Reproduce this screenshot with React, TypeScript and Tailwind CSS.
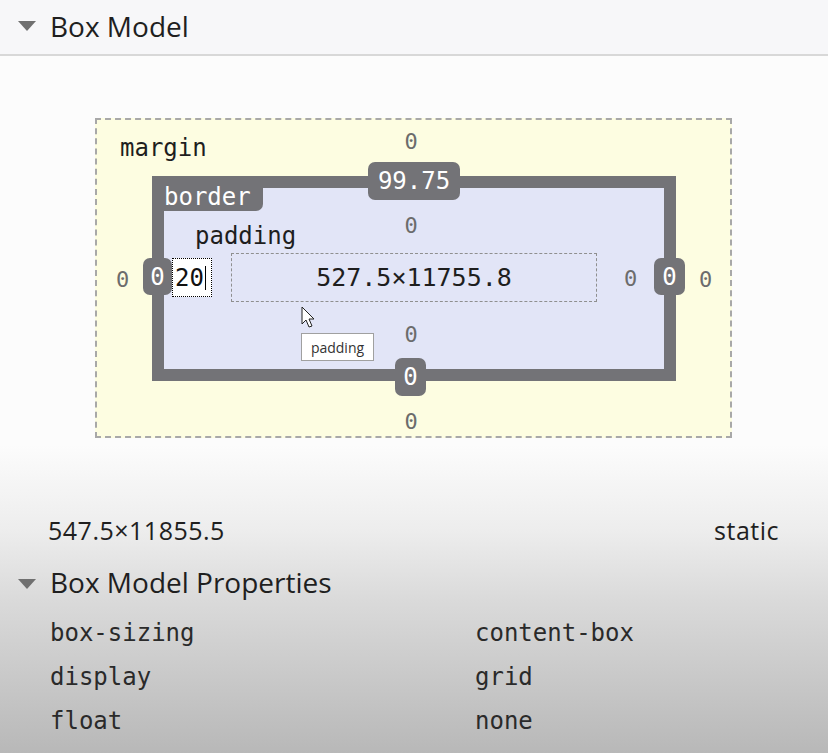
import React from "react";

const mono = "font-['DejaVu_Sans_Mono','Liberation_Mono',monospace]";

function Caret({ className }: { className?: string }) {
  return (
    <svg width="20" height="12" viewBox="0 0 20 12" className={className}>
      <polygon points="1,1 19,1 10,11" fill="#707070" />
    </svg>
  );
}

function Badge({ children, className }: { children: React.ReactNode; className: string }) {
  return (
    <div
      className={`absolute flex items-center justify-center rounded-[7px] bg-[#737377] text-[24px] leading-none text-white ${mono} ${className}`}
    >
      {children}
    </div>
  );
}

function Zero({ className = "" }: { className?: string }) {
  return <span className={`text-[22px] leading-none text-[#6c6c6c] ${mono} ${className}`}>0</span>;
}

function BoxModel() {
  return (
    <div className="ml-[95px] mt-[62px] grid h-[320px] w-[637px] grid-cols-[55px_524px_1fr] grid-rows-[56px_205px_1fr] border-2 border-dashed border-[#a8a8a8] bg-[#fdfde1]">
      {/* margin top */}
      <div className={`col-span-3 col-start-1 row-start-1 self-start pl-[23px] pt-[16px] text-[24px] leading-none text-[#1e1e1e] ${mono}`}>
        margin
      </div>
      <div className="col-start-2 row-start-1 self-start justify-self-center pr-[6px] pt-[11px]">
        <Zero />
      </div>

      {/* margin left */}
      <div className="col-start-1 row-start-2 flex items-center justify-center pr-[4px] pt-[3px]">
        <Zero />
      </div>

      {/* border box */}
      <div className="relative col-start-2 row-start-2 grid grid-cols-[67px_366px_1fr] grid-rows-[65px_49px_1fr] border-[12px] border-[#737377] bg-[#e2e5f7]">
        <div className="col-span-3 col-start-1 row-start-1 h-[23px] w-[99px] self-start justify-self-start rounded-br-[7px] bg-[#737377]">
          <div className={`-mt-[3px] text-[24px] leading-none text-white ${mono}`}>border</div>
        </div>
        <div className={`col-span-3 col-start-1 row-start-1 self-start justify-self-start pl-[31px] pt-[36px] text-[24px] leading-none text-[#1e1e1e] ${mono}`}>
          padding
        </div>
        <div className="col-start-2 row-start-1 self-start justify-self-center pr-[6px] pt-[27px]">
          <Zero />
        </div>

        {/* padding left input */}
        <div className="col-start-1 row-start-2 flex items-center pl-[8px]">
          <div className="flex h-[39px] w-[40px] items-center border border-dotted border-black bg-white pl-[2px]">
            <span className={`text-[24px] leading-none text-[#111] ${mono}`}>20</span>
            <span className="ml-[1px] h-[24px] w-[1.5px] bg-black" />
          </div>
        </div>

        {/* content */}
        <div className="col-start-2 row-start-2 flex items-center justify-center border border-dashed border-[#8f8f8f]">
          <span className={`text-[25px] leading-none text-[#1e1e1e] ${mono}`}>527.5×11755.8</span>
        </div>

        <div className="col-start-3 row-start-2 flex items-center justify-center pt-[3px]">
          <Zero />
        </div>

        <div className="col-start-2 row-start-3 self-start justify-self-center pr-[6px] pt-[22px]">
          <Zero />
        </div>

        <Badge className="left-1/2 top-[-26px] h-[38px] w-[92px] -translate-x-1/2">99.75</Badge>
        <Badge className="left-[-21px] top-[70px] h-[37px] w-[29px]">0</Badge>
        <Badge className="right-[-21px] top-[70px] h-[37px] w-[31px]">0</Badge>
        <Badge className="left-[231px] top-[170px] h-[38px] w-[31px]">0</Badge>

        {/* hover cursor and tooltip */}
        <svg
          className="absolute left-[137px] top-[118px]"
          width="16"
          height="24"
          viewBox="0 0 16 24"
        >
          <path d="M1 1 L1 18 L5 14 L8 21 L11 20 L8 13 L13 13 Z" fill="white" stroke="#222" strokeWidth="1" strokeLinejoin="round" />
        </svg>
        <div className="absolute left-[137px] top-[145px] flex h-[28px] w-[73px] items-center justify-center border border-[#a0a0a0] bg-white font-['Open_Sans',sans-serif] text-[14px] text-[#333]">
          padding
        </div>
      </div>

      {/* margin right */}
      <div className="col-start-3 row-start-2 flex items-center justify-center pl-[5px] pt-[3px]">
        <Zero />
      </div>

      {/* margin bottom */}
      <div className="col-start-2 row-start-3 self-start justify-self-center pr-[6px] pt-[30px]">
        <Zero />
      </div>
    </div>
  );
}

const props = [
  ["box-sizing", "content-box"],
  ["display", "grid"],
  ["float", "none"],
];

export default function App() {
  return (
    <div className="h-[753px] w-[828px] overflow-hidden bg-[linear-gradient(to_bottom,#fcfcfc_445px,#ededed_530px,#dadada_600px,#b8b8b8_753px)] font-['Open_Sans',sans-serif] text-[#1f1f1f]">
      <div className="flex h-[56px] items-center border-b-2 border-[#d8d8d8] bg-[#f7f7f9] pb-[2px] pl-[17px]">
        <Caret className="mr-[13px]" />
        <span className="text-[28px] leading-[36px]">Box Model</span>
      </div>

      <BoxModel />

      <div className="mt-[76px] flex items-center justify-between pl-[48px] pr-[49px] text-[25px] leading-[32px] tracking-[0.5px]">
        <span>547.5×11855.5</span>
        <span>static</span>
      </div>

      <div className="mt-[18px] flex items-center pl-[17px]">
        <Caret className="mr-[13px] mt-[4px]" />
        <span className="text-[28px] leading-[36px]">Box Model Properties</span>
      </div>

      <div className={`mt-[11px] pl-[50px] text-[24px] leading-[44px] text-[#2a2a2a] ${mono}`}>
        {props.map(([k, v]) => (
          <div key={k} className="grid grid-cols-[425px_1fr]">
            <span>{k}</span>
            <span>{v}</span>
          </div>
        ))}
      </div>
    </div>
  );
}
